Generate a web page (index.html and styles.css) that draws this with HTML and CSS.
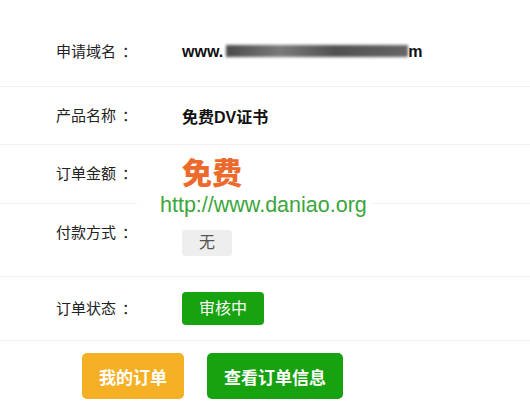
FILE: index.html
```html
<!DOCTYPE html>
<html lang="zh-CN">
<head>
  <meta charset="UTF-8" />
  <meta name="viewport" content="width=device-width, initial-scale=1.0" />
  <title>订单详情</title>
  <link rel="stylesheet" href="styles.css">
</head>
<body>

<!-- 订单详情 -->
<div class="order-page">
  <div class="order-row row-domain">
    <div class="order-label">申请域名<span class="colon">：</span></div>
    <div class="order-value strong">www.<span class="blurred"></span>m</div>
  </div>

  <div class="order-row row-product">
    <div class="order-label">产品名称<span class="colon">：</span></div>
    <div class="order-value strong">免费DV证书</div>
  </div>

  <div class="order-row row-price">
    <div class="order-label">订单金额<span class="colon">：</span></div>
    <div class="order-value price">免费</div>
  </div>

  <div class="order-row row-pay">
    <div class="order-label">付款方式<span class="colon">：</span></div>
    <div class="order-value"><span class="pay-chip">无</span></div>
  </div>

  <div class="order-row row-status">
    <div class="order-label">订单状态<span class="colon">：</span></div>
    <div class="order-value"><span class="status-badge">审核中</span></div>
  </div>

  <div class="order-actions">
    <button class="btn btn-orange">我的订单</button>
    <button class="btn btn-green">查看订单信息</button>
  </div>

  <div class="watermark">http://www.daniao.org</div>
</div>

</body>
</html>
```

FILE: styles.css
```css
/* General Styling */
body {
  margin: 0;
  background-color: #ffffff;
  color: #333333;
  font-family: "Liberation Sans", "Noto Sans CJK SC", sans-serif;
}

.order-page {
  position: relative;
  width: 530px;
  padding-top: 18px;
}

/* Rows */
.order-row {
  display: flex;
  align-items: center;
  padding-left: 56px;
  border-bottom: 1px solid #f1f1f1;
}

.row-domain { height: 68px; }
.row-product { height: 57px; }
.row-price { height: 58px; }
.row-status { height: 63px; }

.row-pay {
  height: 73px;
  align-items: flex-start;
  box-sizing: border-box;
  padding-top: 18px;
}

.order-label {
  width: 126px;
  font-size: 15px;
  line-height: 22px;
  color: #222222;
}

.colon {
  padding-left: 6px;
}

.order-value {
  font-size: 16px;
  color: #222222;
}

.order-value.strong {
  font-weight: bold;
  color: #111111;
}

.blurred {
  display: inline-block;
  width: 182px;
  height: 12px;
  margin: 0 0 0 3px;
  vertical-align: 0;
  background: linear-gradient(90deg, #4a4a4a 0%, #7a7a7a 30%, #505050 60%, #666 100%);
  filter: blur(1.8px);
}

.order-value.price {
  font-size: 30px;
  font-weight: 900;
  color: #ee6a2c;
  line-height: 34px;
}

.pay-chip {
  display: inline-block;
  width: 50px;
  height: 26px;
  margin-top: 8px;
  line-height: 26px;
  text-align: center;
  background-color: #eeeeee;
  border-radius: 3px;
  font-size: 16px;
  color: #555555;
}

.status-badge {
  display: inline-block;
  padding: 0 17px;
  height: 33px;
  line-height: 33px;
  background-color: #17a20f;
  border-radius: 4px;
  color: #ffffff;
  font-size: 16px;
}

/* Buttons */
.order-actions {
  display: flex;
  gap: 23px;
  padding: 12px 0 0 82px;
}

.btn {
  height: 46px;
  padding: 0 17px;
  border: none;
  border-radius: 5px;
  color: #ffffff;
  font-family: "Liberation Sans", "Noto Sans CJK SC", sans-serif;
  font-size: 17px;
  font-weight: bold;
  cursor: pointer;
}

.btn-orange {
  background-color: #f6b026;
}

.btn-green {
  background-color: #17a20f;
}

/* Watermark */
.watermark {
  position: absolute;
  left: 137px;
  top: 193px;
  width: 212px;
  height: 36px;
  padding-left: 23px;
  line-height: 24px;
  font-family: "Liberation Sans", sans-serif;
  font-size: 21.5px;
  color: #3aa63a;
  background-color: rgba(255, 255, 255, 0.9);
}
```
